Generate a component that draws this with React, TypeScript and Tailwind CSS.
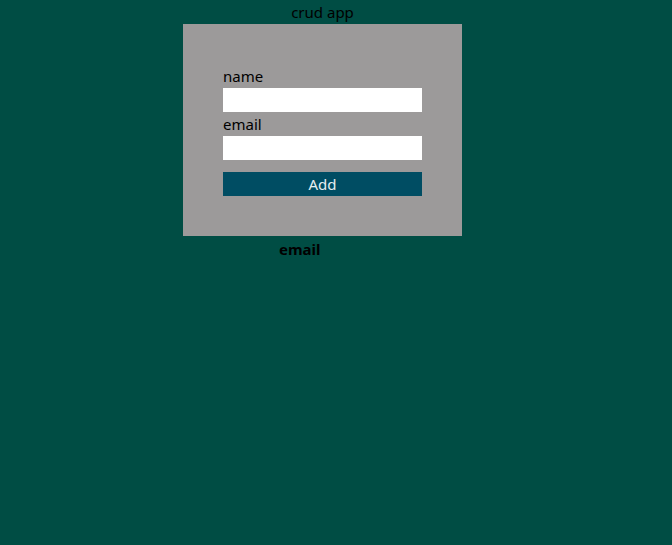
export default function App() {
  return (
    <div className="min-h-[545px] w-full bg-[#004d44] text-black">
      <div className="flex w-[645px] flex-col items-center font-['Noto_Sans',sans-serif] text-[15px]">
        <h1 className="h-6 leading-6">crud app</h1>
        <form className="flex w-[279px] flex-col bg-[#9c9a9a] p-10">
          <label className="h-6 leading-6">name</label>
          <input className="h-6 w-[199px] bg-white" />
          <label className="h-6 leading-6">email</label>
          <input className="h-6 w-[199px] bg-white" />
          <button type="button" className="mt-3 h-6 w-[199px] bg-[#004d63] leading-6 text-[#e6eef0]">
            Add
          </button>
        </form>
        <div className="flex w-full pl-[279px]">
          <span className="h-6 font-bold leading-6 pt-px">email</span>
        </div>
      </div>
    </div>
  );
}
